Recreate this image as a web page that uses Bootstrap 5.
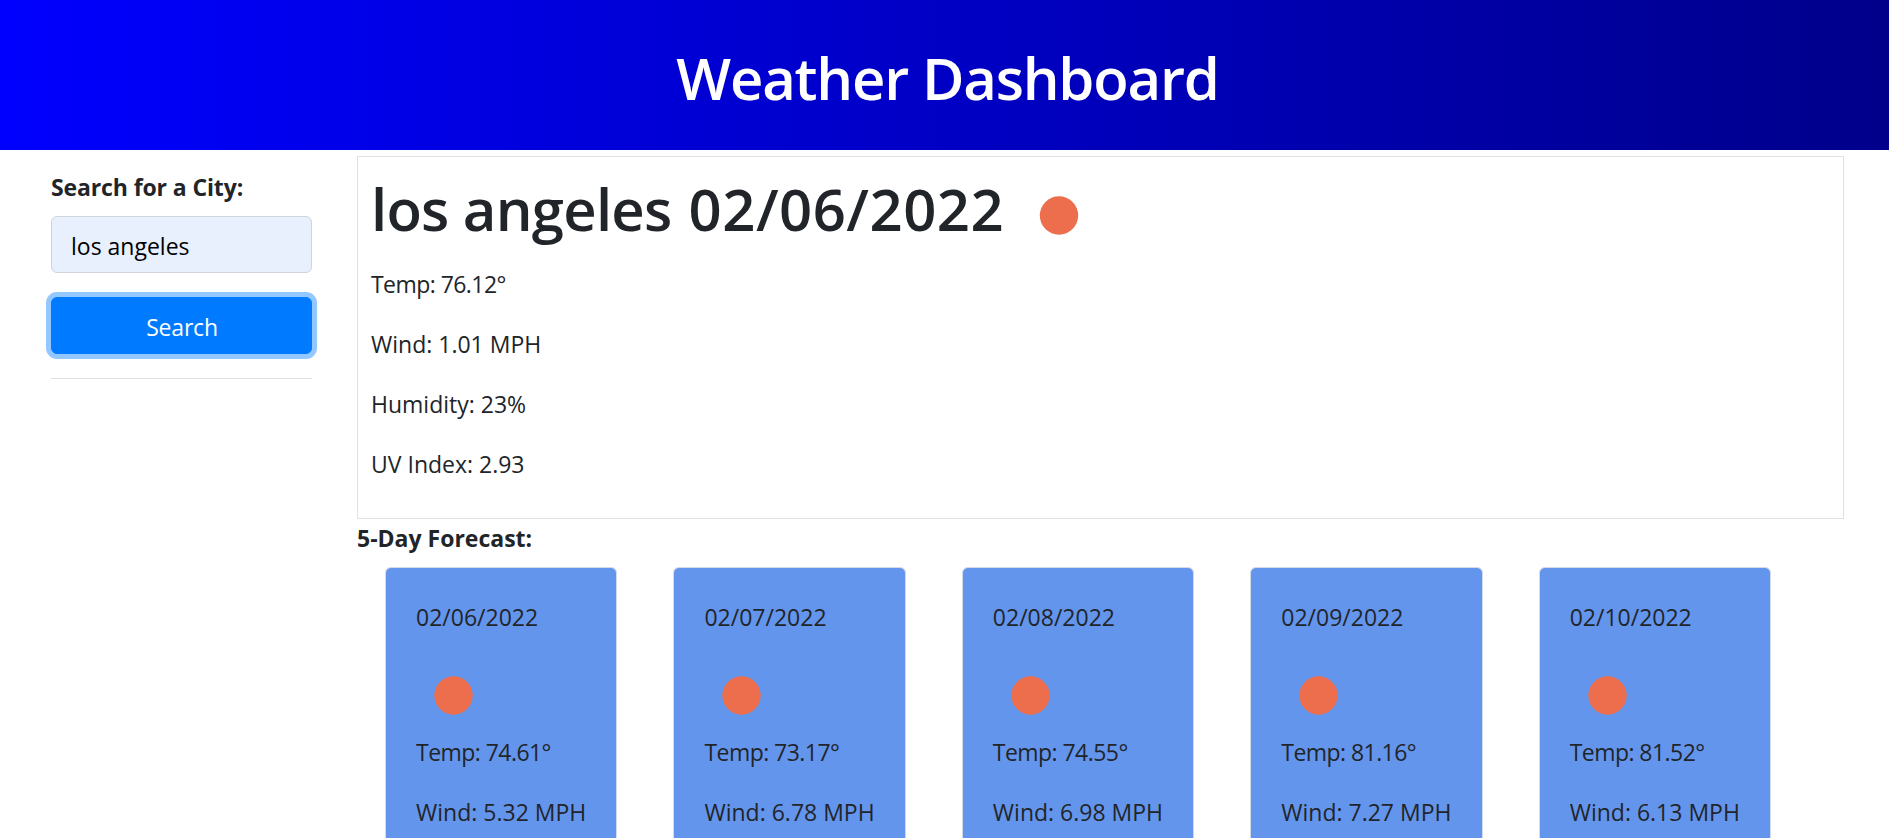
<!DOCTYPE html>
<html lang="en">
<head>
<meta charset="utf-8">
<meta name="viewport" content="width=device-width, initial-scale=1">
<title>Weather Dashboard</title>
<link href="https://cdn.jsdelivr.net/npm/bootstrap@5.3.0/dist/css/bootstrap.min.css" rel="stylesheet">
<style>
  body { font-family: "Open Sans", "Noto Sans", sans-serif; font-size: 23px; line-height: 36px; color: #212529; height: 100vh; }
  h1 { font-size: 58px; font-weight: 600; line-height: 72px; margin: 0; }
  .page-header { height: 150px; padding: 42px 0 0 6px; background: linear-gradient(to right, #0000ff, #00008b); }
  .page-header h1 { letter-spacing: -1.2px; }
  .search-panel { width: 261px; margin: 19px 45px 0 51px; }
  .search-panel label { margin-bottom: 11px; letter-spacing: -.12px; }
  .search-panel .form-control { height: 57px; padding: 10px 18px 8px 19px; font-size: 23px; line-height: 36px; color: #000; background: #e8f0fe; border-color: #ced4da; border-radius: 6px; }
  .search-panel .btn { height: 57px; margin-top: 24px; padding: 11px 0 8px 1px; font-size: 23px; line-height: 36px; letter-spacing: -.2px; color: #fff; background: #007bff; border-color: #007bff; border-radius: 6px; box-shadow: 0 0 0 5px #93c7ff; }
  .search-panel hr { margin: 24px 0; border-top: 1px solid #dfdfdf; opacity: 1; }
  .results { width: 1487px; margin-top: 6px; }
  .current { height: 363px; padding: 16px 13px 0; border: 1px solid #dee2e6; }
  .current-head { margin-bottom: 21px; }
  .current-head svg { margin-left: 14px; }
  .city-name { letter-spacing: -.75px; }
  .city-date { margin-left: 2px; letter-spacing: .5px; }
  p { margin-bottom: 24px; }
  .forecast-title { margin: 1px 0 11px; }
  .forecast { width: 1442px; }
  .day-card { width: 232.3px; height: 480px; padding: 31px 0 0 30px; background: #6495ed; border: 1px solid #d3dbea; border-radius: 6px; color: #212529; }
  .temp { letter-spacing: -.55px; }
  svg { display: block; fill: #ec6e4c; flex: none; }
</style>
</head>
<body class="overflow-hidden">
<header class="page-header text-center text-white"><h1>Weather Dashboard</h1></header>
<div class="d-flex align-items-start">
  <aside class="search-panel flex-shrink-0">
    <label class="d-block fw-bold" for="city">Search for a City:</label>
    <input class="form-control" id="city" type="text" value="los angeles">
    <button class="btn btn-primary w-100" type="button">Search</button>
    <hr>
  </aside>
  <main class="results flex-shrink-0">
    <section class="current">
      <div class="current-head d-flex">
        <h1><span class="city-name">los angeles</span> <span class="city-date">02/06/2022</span></h1>
        <svg width="79" height="72"><circle cx="41" cy="42.5" r="19.2"/></svg>
      </div>
      <p class="temp">Temp: 76.12°</p>
      <p>Wind: 1.01 MPH</p>
      <p>Humidity: 23%</p>
      <p>UV Index: 2.93</p>
    </section>
    <div class="forecast-title fw-bold">5-Day Forecast:</div>
    <section class="forecast d-flex">
      <div class="col"><div class="card day-card mx-auto"><p>02/06/2022</p><svg width="75" height="75"><circle cx="37.5" cy="36.5" r="19.2"/></svg><p class="temp">Temp: 74.61°</p><p>Wind: 5.32 MPH</p></div></div>
      <div class="col"><div class="card day-card mx-auto"><p>02/07/2022</p><svg width="75" height="75"><circle cx="37.5" cy="36.5" r="19.2"/></svg><p class="temp">Temp: 73.17°</p><p>Wind: 6.78 MPH</p></div></div>
      <div class="col"><div class="card day-card mx-auto"><p>02/08/2022</p><svg width="75" height="75"><circle cx="37.5" cy="36.5" r="19.2"/></svg><p class="temp">Temp: 74.55°</p><p>Wind: 6.98 MPH</p></div></div>
      <div class="col"><div class="card day-card mx-auto"><p>02/09/2022</p><svg width="75" height="75"><circle cx="37.5" cy="36.5" r="19.2"/></svg><p class="temp">Temp: 81.16°</p><p>Wind: 7.27 MPH</p></div></div>
      <div class="col"><div class="card day-card mx-auto"><p>02/10/2022</p><svg width="75" height="75"><circle cx="37.5" cy="36.5" r="19.2"/></svg><p class="temp">Temp: 81.52°</p><p>Wind: 6.13 MPH</p></div></div>
    </section>
  </main>
</div>
<script src="https://cdn.jsdelivr.net/npm/bootstrap@5.3.0/dist/js/bootstrap.bundle.min.js"></script>
</body>
</html>
